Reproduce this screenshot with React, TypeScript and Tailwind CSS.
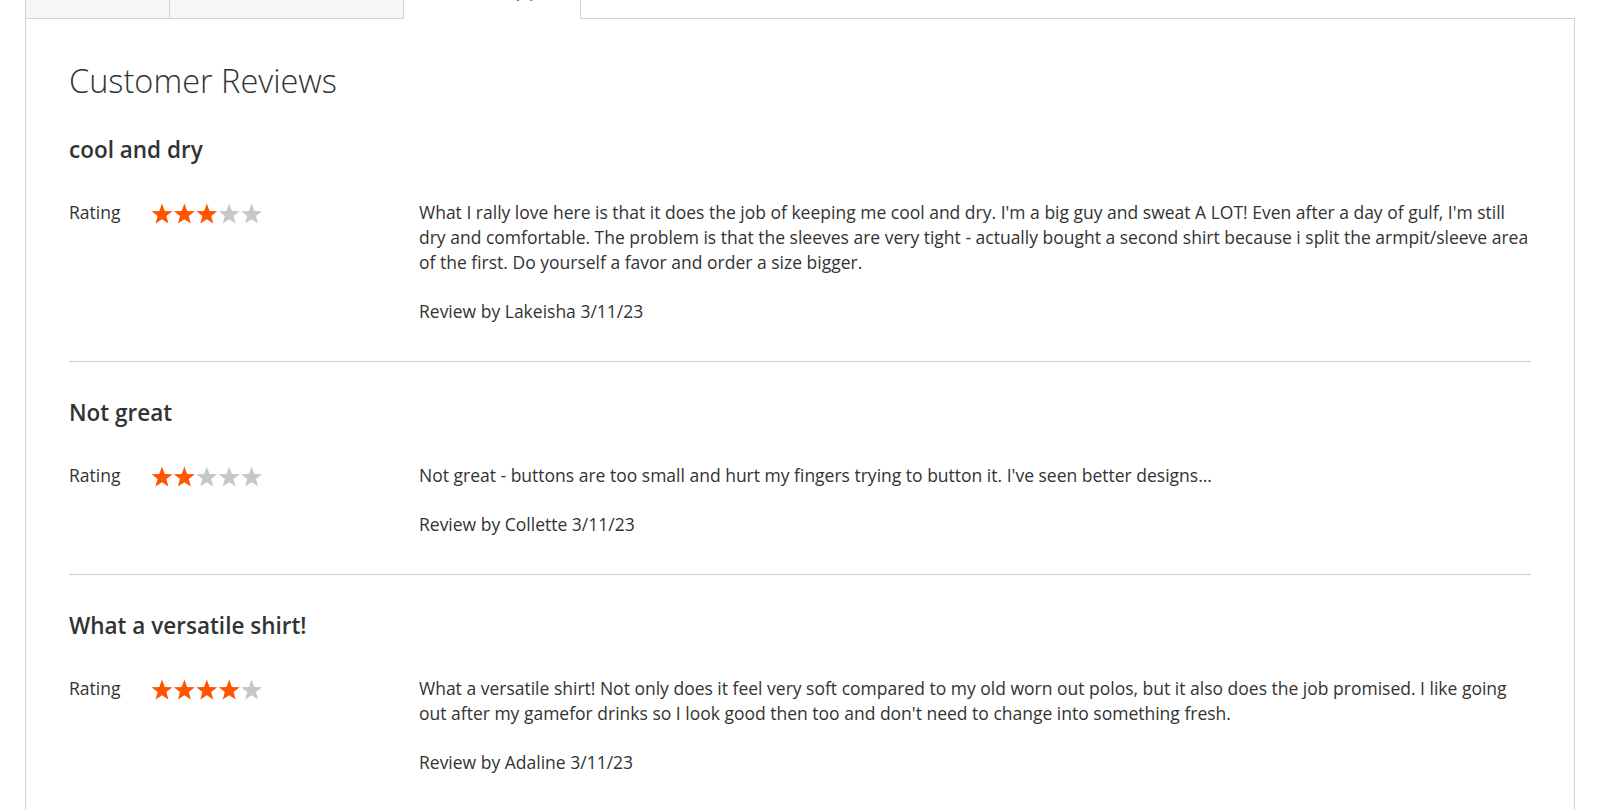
import React from "react";

const reviews = [
  {
    title: "cool and dry",
    rating: 3,
    text: "What I rally love here is that it does the job of keeping me cool and dry. I'm a big guy and sweat A LOT! Even after a day of gulf, I'm still dry and comfortable. The problem is that the sleeves are very tight - actually bought a second shirt because i split the armpit/sleeve area of the first. Do yourself a favor and order a size bigger.",
    author: "Lakeisha",
  },
  {
    title: "Not great",
    rating: 2,
    text: "Not great - buttons are too small and hurt my fingers trying to button it. I've seen better designs...",
    author: "Collette",
  },
  {
    title: "What a versatile shirt!",
    rating: 4,
    text: "What a versatile shirt! Not only does it feel very soft compared to my old worn out polos, but it also does the job promised. I like going out after my gamefor drinks so I look good then too and don't need to change into something fresh.",
    author: "Adaline",
  },
];

function starPoints(cx: number, cy: number, R: number, r: number) {
  const pts: string[] = [];
  for (let i = 0; i < 10; i++) {
    const rad = i % 2 === 0 ? R : r;
    const a = -Math.PI / 2 + (i * Math.PI) / 5;
    pts.push(`${(cx + rad * Math.cos(a)).toFixed(2)},${(cy + rad * Math.sin(a)).toFixed(2)}`);
  }
  return pts.join(" ");
}

function Stars({ value }: { value: number }) {
  return (
    <svg width="114" height="22" viewBox="0 0 114 22" className="block">
      {[0, 1, 2, 3, 4].map((i) => (
        <polygon
          key={i}
          points={starPoints(11 + i * 22.4, 11.6, 11, 4.6)}
          fill={i < value ? "#ff5501" : "#c7c7c7"}
        />
      ))}
    </svg>
  );
}

export default function App() {
  return (
    <div className="bg-white min-h-[810px] font-['Open_Sans',sans-serif] text-[#333] overflow-hidden">
      <div className="mx-[25px] mt-[-40px]">
        <div className="flex h-[59px]">
          <div className="w-[144px] bg-[#f6f6f6] border border-[#d1d1d1] border-r-0"></div>
          <div className="w-[234px] bg-[#f6f6f6] border border-[#d1d1d1] border-r-0"></div>
          <div className="w-[178px] bg-white border border-[#d1d1d1] border-b-0 pl-[37px] pt-[18px] text-[17.5px] leading-[25px] font-semibold text-[#333] whitespace-nowrap">
            Reviews (3)
          </div>
          <div className="flex-1 border-b border-[#d1d1d1]"></div>
        </div>
        <div className="border border-t-0 border-[#d1d1d1] px-[43px] pt-[44px] pb-[40px]">
          <h2 className="text-[32.5px] leading-[36px] font-light text-[#333]">Customer Reviews</h2>
          <div className="pt-[37px]">
            {reviews.map((r, idx) => (
              <div
                key={idx}
                className={
                  idx === 0
                    ? "pb-[37px] border-b border-[#cccccc]"
                    : idx === reviews.length - 1
                    ? "pt-[37px] pb-[37px]"
                    : "pt-[37px] pb-[37px] border-b border-[#cccccc]"
                }
              >
                <div className="text-[22.5px] leading-[27px] font-semibold text-[#333]">{r.title}</div>
                <div className="flex mt-[37px]">
                  <div className="w-[350px] shrink-0 flex items-start">
                    <div className="w-[82px] text-[17.5px] leading-[25px]">Rating</div>
                    <div className="mt-[3px]">
                      <Stars value={r.rating} />
                    </div>
                  </div>
                  <div className="flex-1 min-w-0">
                    <div className="text-[17.5px] leading-[25px]">{r.text}</div>
                    <div className="mt-[24px] text-[17.5px] leading-[25px]">
                      Review by {r.author} 3/11/23
                    </div>
                  </div>
                </div>
              </div>
            ))}
          </div>
        </div>
      </div>
    </div>
  );
}
